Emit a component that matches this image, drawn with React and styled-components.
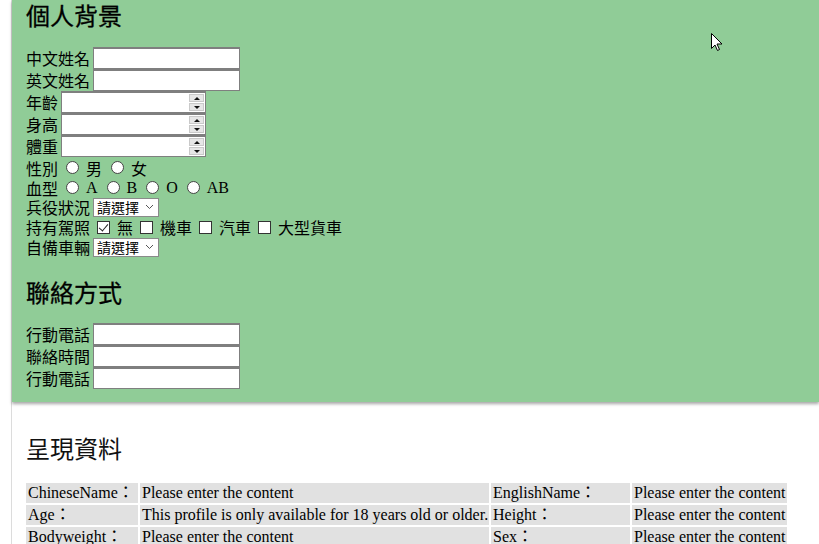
import React from 'react';
import styled, { createGlobalStyle } from 'styled-components';

const GlobalStyle = createGlobalStyle`
  html, body {
    margin: 0;
    padding: 0;
    background: #ffffff;
  }
  body {
    font-family: "Noto Sans CJK TC", "Noto Sans", sans-serif;
    color: #000;
    overflow: hidden;
  }
`;

const CJK = `"Noto Sans CJK TC", "Noto Sans", sans-serif`;
const SERIF = `"Liberation Serif", "Noto Sans CJK TC", serif`;

const Page = styled.div`
  margin-left: 11px;
  border-left: 1px solid #dcdcdc;
  min-height: 544px;
  position: relative;
`;

const FormPanel = styled.section`
  background: #90cc97;
  padding: 0 0 13px 14px;
  box-shadow: 0 2px 3px rgba(0, 0, 0, 0.35);
`;

const Heading = styled.h2`
  margin: ${(p) => p.$mt || 0}px 0 ${(p) => p.$mb || 0}px 0;
  font-family: ${CJK};
  font-size: 24px;
  font-weight: 400;
  line-height: 30px;
  color: ${(p) => (p.$dark ? '#000' : '#111')};
  -webkit-text-stroke: ${(p) => (p.$dark ? '0.3px #000' : '0')};
`;

const Row = styled.div`
  display: flex;
  align-items: center;
  height: ${(p) => p.$h || 22}px;
  gap: ${(p) => p.$gap ?? 3}px;
  font-family: ${CJK};
  font-size: 16px;
  line-height: 18px;
`;

const Label = styled.span`
  white-space: nowrap;
`;

const TextBox = styled.input`
  box-sizing: border-box;
  width: 147px;
  height: 22px;
  margin: 0;
  border: 1px solid #7f7f7f;
  border-top-width: 2px;
  background: #fff;
  padding: 0 2px;
  font-size: 14px;
  outline: none;
`;

const NumberBox = styled.div`
  box-sizing: border-box;
  width: 145px;
  height: 22px;
  display: flex;
  align-items: stretch;
  border: 1px solid #7f7f7f;
  border-top-width: 2px;
  background: #fff;
  padding: 1px 1px 1px 0;
`;

const NumberInput = styled.input`
  flex: 1;
  min-width: 0;
  border: none;
  outline: none;
  padding: 0 2px;
  background: transparent;
`;

const Spinner = styled.div`
  width: 15px;
  display: flex;
  flex-direction: column;
  gap: 1px;
`;

const SpinButton = styled.div`
  flex: 1;
  background: #e6e6e6;
  border: 1px solid #c9c9c9;
  display: flex;
  align-items: center;
  justify-content: center;
`;

const Arrow = styled.span`
  width: 0;
  height: 0;
  border-left: 3px solid transparent;
  border-right: 3px solid transparent;
  ${(p) =>
    p.$down
      ? 'border-top: 3px solid #111;'
      : 'border-bottom: 3px solid #111;'}
`;

const Group = styled.span`
  display: inline-flex;
  align-items: center;
  gap: ${(p) => p.$gap || 7}px;
  margin-left: ${(p) => p.$ml ?? 9}px;
  font-family: ${(p) => (p.$serif ? SERIF : CJK)};
`;

const Radio = styled.input.attrs({ type: 'radio' })`
  appearance: none;
  margin: 0;
  width: 13px;
  height: 13px;
  border-radius: 50%;
  border: 1px solid #444;
  background: #fff;
  box-sizing: border-box;
  flex: none;
`;

const Check = styled.input.attrs({ type: 'checkbox' })`
  appearance: none;
  margin: 0;
  width: 13px;
  height: 13px;
  border: 1px solid #333;
  background: #fff;
  box-sizing: border-box;
  position: relative;
  flex: none;
  &:checked::after {
    content: '';
    position: absolute;
    left: 3px;
    top: 0px;
    width: 4px;
    height: 8px;
    border-right: 1px solid #222;
    border-bottom: 1px solid #222;
    transform: rotate(40deg);
  }
`;

const SelectBox = styled.div`
  box-sizing: border-box;
  width: 66px;
  height: 19px;
  display: flex;
  align-items: center;
  border: 1px solid #8a8a8a;
  background: #fff;
  padding: 0 4px 0 1px;
`;

const Select = styled.select`
  appearance: none;
  flex: 1;
  min-width: 0;
  border: none;
  outline: none;
  background: transparent;
  font-family: ${CJK};
  font-size: 14px;
  line-height: 16px;
  padding: 0 2px;
  color: #000;
`;

const ResultSection = styled.section`
  padding: 31px 0 0 14px;
`;

const DataTable = styled.table`
  width: 765px;
  border-spacing: 2px;
  margin: 18px 0 0 -2px;
  table-layout: fixed;
  font-family: ${SERIF};
  font-size: 16px;
`;

const Cell = styled.td`
  background: #e1e1e1;
  height: 20px;
  padding: 0 2px;
  white-space: nowrap;
  overflow: hidden;
  width: ${(p) => p.$w}px;
  line-height: 18px;
`;

const Cursor = styled.svg`
  position: absolute;
  left: 699px;
  top: 33px;
`;

const TextField = ({ label }) => (
  <Row>
    <Label>{label}</Label>
    <TextBox type="text" />
  </Row>
);

const NumberField = ({ label }) => (
  <Row>
    <Label>{label}</Label>
    <NumberBox>
      <NumberInput type="text" />
      <Spinner>
        <SpinButton>
          <Arrow />
        </SpinButton>
        <SpinButton>
          <Arrow $down />
        </SpinButton>
      </Spinner>
    </NumberBox>
  </Row>
);

const Chevron = () => (
  <svg width="9" height="6" viewBox="0 0 9 6">
    <path d="M1 1 L4.5 4.5 L8 1" fill="none" stroke="#555" strokeWidth="1" />
  </svg>
);

const SelectField = ({ label }) => (
  <Row $h={20}>
    <Label>{label}</Label>
    <SelectBox>
      <Select defaultValue="">
        <option value="">請選擇</option>
      </Select>
      <Chevron />
    </SelectBox>
  </Row>
);

const rows = [
  ['ChineseName：', 'Please enter the content', 'EnglishName：', 'Please enter the content'],
  ['Age：', 'This profile is only available for 18 years old or older.', 'Height：', 'Please enter the content'],
  ['Bodyweight：', 'Please enter the content', 'Sex：', 'Please enter the content'],
];

const widths = [108, 345, 135, 151];

export default function App() {
  return (
    <>
      <GlobalStyle />
      <Page>
        <FormPanel>
          <Heading $dark $mb={17}>個人背景</Heading>
          <TextField label="中文姓名" />
          <TextField label="英文姓名" />
          <NumberField label="年齡" />
          <NumberField label="身高" />
          <NumberField label="體重" />
          <Row $h={21} $gap={0}>
            <Label>性別</Label>
            <Group $ml={8}>
              <Radio name="sex" />男
            </Group>
            <Group>
              <Radio name="sex" />女
            </Group>
          </Row>
          <Row $h={19} $gap={0}>
            <Label>血型</Label>
            <Group $ml={8} $serif>
              <Radio name="blood" />A
            </Group>
            <Group $serif>
              <Radio name="blood" />B
            </Group>
            <Group $serif>
              <Radio name="blood" />O
            </Group>
            <Group $serif>
              <Radio name="blood" />AB
            </Group>
          </Row>
          <SelectField label="兵役狀況" />
          <Row $h={20} $gap={0}>
            <Label>持有駕照</Label>
            <Group $ml={7}>
              <Check defaultChecked />無
            </Group>
            <Group $ml={7}>
              <Check />機車
            </Group>
            <Group $ml={7}>
              <Check />汽車
            </Group>
            <Group $ml={7}>
              <Check />大型貨車
            </Group>
          </Row>
          <SelectField label="自備車輛" />
          <Heading $dark $mt={20} $mb={16}>聯絡方式</Heading>
          <TextField label="行動電話" />
          <TextField label="聯絡時間" />
          <TextField label="行動電話" />
        </FormPanel>
        <ResultSection>
          <Heading>呈現資料</Heading>
          <DataTable>
            <tbody>
              {rows.map((r, i) => (
                <tr key={i}>
                  {r.map((c, j) => (
                    <Cell key={j} $w={widths[j]}>
                      {c}
                    </Cell>
                  ))}
                </tr>
              ))}
            </tbody>
          </DataTable>
        </ResultSection>
        <Cursor width="12" height="19" viewBox="0 0 12 19">
          <path
            d="M0.5 0.5 L0.5 15.5 L4 12 L6.5 17.5 L8.5 16.5 L6 11 L11 11 Z"
            fill="#fff"
            stroke="#000"
            strokeWidth="1"
          />
        </Cursor>
      </Page>
    </>
  );
}
